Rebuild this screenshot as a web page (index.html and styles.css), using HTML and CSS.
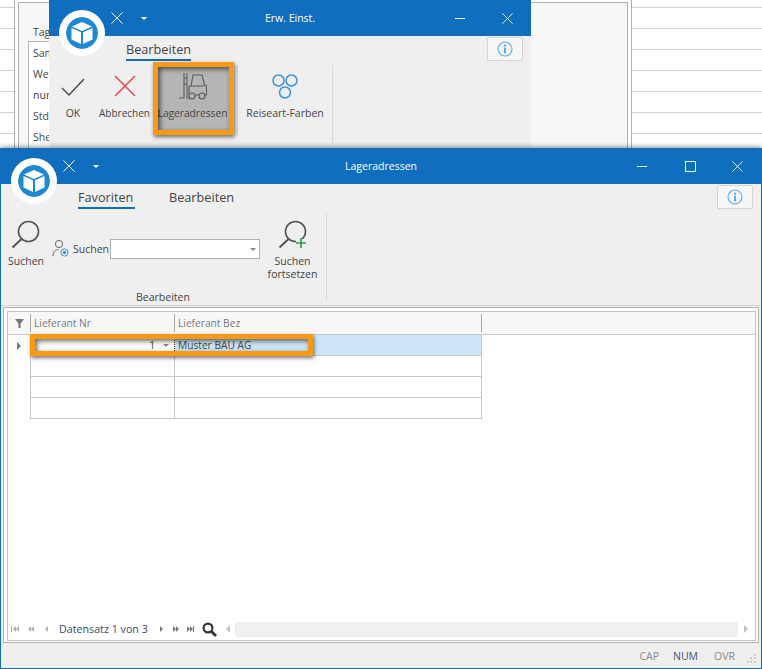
FILE: index.html
```html
<!DOCTYPE html>
<html lang="en">
<head>
    <meta charset="UTF-8">
    <meta name="viewport" content="width=device-width, initial-scale=1.0">
    <title>Lageradressen</title>
    <link rel="stylesheet" href="styles.css">
</head>
<body>
    <svg class="defs" width="0" height="0">
        <symbol id="cube" viewBox="0 0 32 32">
            <circle cx="16" cy="16" r="16" fill="#1e88d2"/>
            <path d="M16 5 L26 9.5 L16 14 L6 9.5 Z" fill="#fff"/>
            <path d="M5.5 11 L15 15.3 L15 27 L5.5 22.5 Z" fill="#fff"/>
            <path d="M26.5 11 L17 15.3 L17 27 L26.5 22.5 Z" fill="#fff"/>
        </symbol>
        <symbol id="info" viewBox="0 0 16 16">
            <circle cx="8" cy="8" r="7" fill="none" stroke="#5aaee6" stroke-width="1.1"/>
            <rect x="7" y="3.6" width="2" height="2" fill="#5aaee6"/>
            <rect x="7" y="6.6" width="2" height="5.8" fill="#5aaee6"/>
        </symbol>
        <symbol id="close" viewBox="0 0 14 14">
            <path d="M0.500 0.500 L13.500 13.500 M13.500 0.500 L0.500 13.500" fill="none" stroke="#fff" stroke-width="1.100"/>
        </symbol>
        <symbol id="lens" viewBox="0 0 30 30">
            <circle cx="17.500" cy="11.500" r="10" fill="none" stroke="#555" stroke-width="1.600"/>
            <path d="M10.500 19 L1.500 27.500" fill="none" stroke="#555" stroke-width="2"/>
        </symbol>
    </svg>

    <div class="desktop">
        <!-- what shows behind the two dialogs -->
        <div class="backdrop">
            <div class="back-outer">
                <div class="back-panel">
                    <span class="back-label">Tag</span>
                    <div class="back-list">
                        <span>Sam</span>
                        <span>We</span>
                        <span>nur</span>
                        <span>Std</span>
                        <span>She</span>
                    </div>
                </div>
            </div>
        </div>

        <!-- Erw. Einst. dialog -->
        <div class="window window-back">
            <div class="titlebar">
                <svg class="qa-close"><use href="#close"/></svg>
                <span class="qa-arrow"></span>
                <span class="title">Erw. Einst.</span>
                <span class="win-min"></span>
                <svg class="win-close"><use href="#close"/></svg>
            </div>
            <svg class="logo"><use href="#cube"/></svg>
            <div class="tabs">
                <span class="tab active">Bearbeiten</span>
            </div>
            <button class="info-btn"><svg><use href="#info"/></svg></button>
            <div class="ribbon">
                <div class="rb rb-ok">
                    <svg width="24" height="18" viewBox="0 0 24 18"><path d="M1 10 L8 17 L23 1" fill="none" stroke="#444" stroke-width="1.300"/></svg>
                    <span>OK</span>
                </div>
                <div class="rb rb-cancel">
                    <svg width="22" height="22" viewBox="0 0 22 22"><path d="M1 1 L21 21 M21 1 L1 21" fill="none" stroke="#e8464e" stroke-width="1.500"/></svg>
                    <span>Abbrechen</span>
                </div>
                <div class="rb rb-store">
                    <svg width="28" height="28" viewBox="0 0 28 28">
                        <g fill="none" stroke="#5a5a5a" stroke-width="1.100">
                            <path d="M5 0 V25 H0 M8 0 V25 H10 M5 5 H8 M5 11 H8"/>
                            <path d="M12 13 L14 2 H23 L25.500 12 Q27.500 12 27.500 14 V22 H26 M20 22 H16 M10 22 V14 Q10 13 12 13 H25.500"/>
                            <circle cx="13" cy="23" r="3"/>
                            <circle cx="23" cy="23" r="3"/>
                        </g>
                    </svg>
                    <span>Lageradressen</span>
                </div>
                <i class="rb-sep"></i>
                <div class="rb rb-colors">
                    <svg width="26" height="25" viewBox="0 0 26 25">
                        <g fill="none" stroke="#3b94d6" stroke-width="1.500">
                            <circle cx="6.500" cy="6.500" r="5.500"/>
                            <circle cx="19.500" cy="6.500" r="5.500"/>
                            <circle cx="13" cy="18.500" r="5.500"/>
                        </g>
                    </svg>
                    <span>Reiseart-Farben</span>
                </div>
                <i class="rb-sep rb-sep-long"></i>
            </div>
            <div class="mark mark-store"></div>
        </div>

        <!-- Lageradressen window -->
        <div class="window window-front">
            <div class="titlebar">
                <svg class="qa-close"><use href="#close"/></svg>
                <span class="qa-arrow"></span>
                <span class="title">Lageradressen</span>
                <span class="win-min"></span>
                <span class="win-max"></span>
                <svg class="win-close"><use href="#close"/></svg>
            </div>
            <svg class="logo"><use href="#cube"/></svg>
            <div class="tabs">
                <span class="tab active">Favoriten</span>
                <span class="tab">Bearbeiten</span>
            </div>
            <button class="info-btn"><svg><use href="#info"/></svg></button>
            <div class="ribbon ribbon-front">
                <div class="group">
                    <div class="group-items">
                        <div class="rb rb-search">
                            <svg width="30" height="30"><use href="#lens"/></svg>
                            <span>Suchen</span>
                        </div>
                        <div class="search-field">
                            <svg width="17" height="19" viewBox="0 0 17 19">
                                <g fill="none" stroke="#666" stroke-width="1">
                                    <circle cx="7" cy="5" r="3.600"/>
                                    <path d="M1 17 C1 12 4 10.500 6.500 10.500 M10 10.500 L11 10.800"/>
                                </g>
                                <circle cx="12.500" cy="13.500" r="3.600" fill="none" stroke="#3b94d6"/>
                                <circle cx="12.500" cy="13.500" r="1.700" fill="#3b94d6"/>
                            </svg>
                            <label>Suchen</label>
                            <div class="combo"><i></i></div>
                        </div>
                        <div class="rb rb-continue">
                            <svg width="30" height="30" viewBox="0 0 30 30">
                                <use href="#lens"/>
                                <rect x="18" y="19" width="11" height="10" fill="#efefef"/>
                                <path d="M23 18 V28 M18 23 H28" stroke="#2f9a48" stroke-width="1.600"/>
                            </svg>
                            <span>Suchen<br>fortsetzen</span>
                        </div>
                    </div>
                    <div class="group-name">Bearbeiten</div>
                </div>
                <i class="rb-sep"></i>
            </div>

            <div class="frame">
                <div class="frame-inner">
                    <div class="grid">
                        <div class="grid-row grid-head">
                            <div class="cell-ind">
                                <svg width="9" height="9" viewBox="0 0 10 10"><path d="M0 0 H10 L6.200 5 V10 H3.800 V5 Z" fill="#777"/></svg>
                            </div>
                            <div class="cell">Lieferant Nr</div>
                            <div class="cell">Lieferant Bez</div>
                        </div>
                        <div class="grid-row grid-current">
                            <div class="cell-ind"><i class="row-arrow"></i></div>
                            <div class="cell cell-num">1<i class="cell-drop"></i></div>
                            <div class="cell cell-sel">Muster BAU AG</div>
                        </div>
                        <div class="grid-row">
                            <div class="cell-ind"></div><div class="cell"></div><div class="cell"></div>
                        </div>
                        <div class="grid-row">
                            <div class="cell-ind"></div><div class="cell"></div><div class="cell"></div>
                        </div>
                        <div class="grid-row">
                            <div class="cell-ind"></div><div class="cell"></div><div class="cell"></div>
                        </div>
                        <div class="mark mark-row"></div>
                    </div>
                    <div class="navbar">
                        <div class="nav-btns">
                            <i class="nav-first"></i><i class="nav-prev2"></i><i class="nav-prev"></i>
                        </div>
                        <span class="nav-text">Datensatz 1 von 3</span>
                        <div class="nav-btns nav-btns-right">
                            <i class="nav-next"></i><i class="nav-next2"></i><i class="nav-last"></i>
                        </div>
                        <svg class="nav-lens" width="15" height="15" viewBox="0 0 15 15">
                            <circle cx="6" cy="6" r="4.400" fill="none" stroke="#333" stroke-width="2.200"/>
                            <path d="M9.500 9.500 L14 14" stroke="#333" stroke-width="2.800"/>
                        </svg>
                        <div class="hscroll">
                            <span class="hs-btn"><i class="hs-left"></i></span>
                            <span class="hs-btn"><i class="hs-right"></i></span>
                        </div>
                    </div>
                </div>
            </div>

            <div class="statusbar">
                <span class="st-off">CAP</span>
                <span class="st-on">NUM</span>
                <span class="st-off">OVR</span>
                <svg class="grip" width="10" height="10" viewBox="0 0 10 10">
                    <path d="M8 1h1.500v1.500H8zM8 4.500h1.500V6H8zM8 8h1.500v1.500H8zM4.500 4.500H6V6H4.500zM4.500 8H6v1.500H4.500zM1 8h1.500v1.500H1z" fill="#b4b4b4"/>
                </svg>
            </div>
        </div>
    </div>
</body>
</html>
```

FILE: styles.css
```css
* {
    box-sizing: border-box;
}

html, body {
    margin: 0;
    padding: 0;
}

body {
    font-family: "Open Sans", "Liberation Sans", sans-serif;
    font-size: 10.5px;
    color: #444;
}

.defs {
    position: absolute;
}

.desktop {
    position: relative;
    width: 762px;
    height: 669px;
    overflow: hidden;
    background: #fff;
}

/* background behind the dialogs */
.backdrop {
    position: absolute;
    left: 0;
    top: 0;
    width: 762px;
    height: 148px;
    padding-left: 14px;
    background-color: #fff;
    background-image: linear-gradient(to bottom, transparent 7px, #d0d0d0 7px, #d0d0d0 8px, transparent 8px);
    background-size: 100% 21px;
}

.back-outer {
    width: 618px;
    height: 148px;
    padding: 2px 3px 0;
    background: #fff;
    border-left: 1px solid #b0b0b0;
    border-right: 1px solid #b0b0b0;
}

.back-panel {
    width: 610px;
    height: 146px;
    background: #f7f7f7;
    border: 1px solid #b0b0b0;
    border-bottom: 0;
    padding: 0;
}

.back-label {
    display: block;
    margin: 22px 0 0 14px;
    line-height: 14px;
}

.back-list {
    display: flex;
    flex-direction: column;
    width: 300px;
    margin: 2px 0 0 9px;
    padding-left: 4px;
    height: 110px;
    border: 1px solid #b8b8b8;
    background: #fff;
}

.back-list span {
    height: 21px;
    line-height: 21px;
    padding-top: 1px;
}

/* windows */
.window {
    position: absolute;
    background: #efefef;
}

.window-back {
    left: 49px;
    top: 0;
    width: 482px;
    height: 148px;
}

.window-front {
    left: 0;
    top: 148px;
    width: 762px;
    height: 521px;
    display: flex;
    flex-direction: column;
    border: 1px solid #106ebe;
    border-top: 0;
    box-shadow: 0 -1px 5px rgba(0, 0, 0, 0.45);
}

.titlebar {
    position: relative;
    height: 36px;
    flex: none;
    background: #106ebe;
    color: #fff;
    display: flex;
    align-items: center;
}

.window-front .titlebar {
    margin: 0 -1px;
}

.title {
    position: absolute;
    left: 0;
    right: 0;
    top: 10px;
    text-align: center;
    line-height: 16px;
}

.qa-close {
    position: absolute;
    left: 63px;
    top: 12px;
    width: 12px;
    height: 12px;
}

.window-back .qa-close {
    left: 62px;
}

.qa-arrow {
    position: absolute;
    left: 93px;
    top: 17px;
    border: 3px solid transparent;
    border-top: 3px solid #fff;
    border-bottom: 0;
}

.window-back .qa-arrow {
    left: 92px;
}

.win-min {
    position: absolute;
    right: 66px;
    top: 18px;
    width: 10px;
    height: 1px;
    background: #fff;
}

.window-front .win-min {
    right: 115px;
}

.win-max {
    position: absolute;
    right: 66px;
    top: 13px;
    width: 11px;
    height: 11px;
    border: 1px solid #fff;
}

.win-close {
    position: absolute;
    right: 18px;
    top: 13px;
    width: 11px;
    height: 11px;
}

.window-front .win-close {
    right: 19px;
}

.logo {
    position: absolute;
    left: 17px;
    top: 17px;
    width: 32px;
    height: 32px;
    border-radius: 50%;
    background: #fff;
    box-shadow: 0 0 0 7px #fff;
}

.tabs {
    display: flex;
    gap: 34px;
    height: 26px;
    flex: none;
    padding-left: 77px;
}

.tab {
    height: 25px;
    font-size: 12.7px;
    line-height: 27px;
    color: #444;
}

.tab.active {
    border-bottom: 2px solid #106ebe;
}

.window-front .tab.active {
    width: 57px;
}

.info-btn {
    position: absolute;
    right: 8px;
    top: 37px;
    width: 36px;
    height: 24px;
    padding: 0;
    background: #f6f6f6;
    border: 1px solid #d4d4d4;
    border-radius: 2px;
    display: flex;
    align-items: center;
    justify-content: center;
}

.info-btn svg {
    width: 16px;
    height: 16px;
}

/* ribbon */
.ribbon {
    display: flex;
    height: 80px;
    padding: 3px 0 0 5px;
}

.rb {
    display: flex;
    flex-direction: column;
    align-items: center;
    text-align: center;
    line-height: 13px;
    white-space: nowrap;
}

.rb svg {
    flex: none;
}

.rb-sep {
    flex: none;
    width: 1px;
    height: 71px;
    background: #d8d8d8;
}

.rb-sep-long {
    height: 80px;
}

.rb-ok {
    width: 38px;
    padding-top: 13px;
}

.rb-ok svg {
    margin-bottom: 11px;
}

.rb-cancel {
    width: 61px;
    margin-left: 2px;
    padding-top: 10px;
    font-size: 10px;
}

.rb-cancel svg {
    margin-bottom: 10px;
}

.rb-store {
    width: 79px;
    height: 73px;
    margin: -3px 5px 0 -2px;
    padding-top: 11px;
    background: #b5b5b5;
    font-size: 10.2px;
}

.rb-store svg {
    margin-bottom: 6px;
}

.rb-colors {
    width: 94px;
    margin-left: 1px;
    margin-right: -1px;
    padding: 9px 2px 0 0;
}

.rb-colors svg {
    margin-bottom: 8px;
}

/* orange callouts from the manual */
.mark {
    position: absolute;
    border: 5px solid #f79a16;
    box-shadow: 1px 2px 4px rgba(0, 0, 0, 0.55), inset 2px 2px 5px rgba(0, 0, 0, 0.6);
}

.mark-store {
    left: 104px;
    top: 62px;
    width: 81px;
    height: 73px;
}

.mark-row {
    left: 22px;
    top: 22px;
    width: 283px;
    height: 22px;
}

.ribbon-front {
    height: 122px;
    padding: 30px 0 0 0;
    margin-top: -26px;
    flex: none;
    border-bottom: 1px solid #d4d4d4;
}

.ribbon-front .rb-sep {
    height: 87px;
}

.group {
    width: 325px;
    display: flex;
    flex-direction: column;
}

.group-items {
    display: flex;
    height: 76px;
    padding-top: 6px;
}

.group-name {
    text-align: center;
    line-height: 14px;
    padding-right: 1px;
}

.rb-search {
    width: 50px;
}

.rb-search svg, .rb-continue svg {
    margin-bottom: 5px;
}

.search-field {
    width: 209px;
    height: 21px;
    margin-top: 18px;
    display: flex;
    align-items: center;
}

.search-field svg {
    flex: none;
    margin-left: 1px;
}

.search-field label {
    margin-left: 4px;
    width: 37px;
    flex: none;
}

.combo {
    position: relative;
    width: 150px;
    height: 20px;
    background: #fff;
    border: 1px solid #b0b0b0;
}

.combo i {
    position: absolute;
    right: 3px;
    top: 8px;
    border: 3px solid transparent;
    border-top: 3px solid #888;
    border-bottom: 0;
}

.rb-continue {
    width: 65px;
}

/* grid frame */
.frame {
    flex: 1;
    margin: 1px 2px 1px 2px;
    padding: 3px 2px 1px 3px;
    border: 1px solid #b4b4b4;
    background: #fff;
    min-height: 0;
}

.frame-inner {
    height: 100%;
    border: 1px solid #c4c4c4;
    background: #fff;
    display: flex;
    flex-direction: column;
}

.grid {
    position: relative;
    flex: 1;
    font-size: 10.2px;
}

.grid-row {
    display: grid;
    grid-template-columns: 23px 144px 307px;
    height: 21px;
    border-bottom: 1px solid #c8c8c8;
    width: 474px;
}

.grid-head {
    height: 23px;
    width: 100%;
    background: #f7f7f7;
    color: #777;
}

.grid-head .cell {
    border-right: 1px solid #a8a8a8;
    margin: 2px 0;
    line-height: 18px;
}

.cell-ind {
    display: flex;
    align-items: center;
    justify-content: center;
    border-right: 1px solid #c8c8c8;
}

.grid-row:not(.grid-head) .cell-ind {
    margin-bottom: -1px;
    background: #fff;
    position: relative;
}

.grid-head .cell-ind {
    margin: 2px 0;
    border-right-color: #a8a8a8;
}

.cell {
    padding: 0 3px;
    line-height: 20px;
    border-right: 1px solid #c8c8c8;
    white-space: nowrap;
}

.row-arrow {
    display: block;
    border: 4px solid transparent;
    border-left: 4px solid #777;
    border-right: 0;
}

.cell-num {
    position: relative;
    text-align: right;
    padding-right: 19px;
    border-right: 1px dotted #333;
}

.cell-drop {
    position: absolute;
    right: 5px;
    top: 9px;
    border: 3px solid transparent;
    border-top: 3px solid #888;
    border-bottom: 0;
}

.cell-sel {
    background: #cce4f7;
}

/* record navigator */
.navbar {
    display: flex;
    align-items: center;
    height: 20px;
    flex: none;
    margin-bottom: 1px;
    padding: 0 2px;
}

.nav-btns {
    display: flex;
    align-items: center;
    width: 46px;
    height: 10px;
    position: relative;
}

.nav-btns i {
    position: absolute;
    top: 2px;
    border: 3px solid transparent;
    border-left: 0;
    border-right: 3px solid #b0b0b0;
}

.nav-first {
    left: 3px;
}

.nav-first::before {
    content: "";
    position: absolute;
    left: -2px;
    top: -3px;
    width: 1px;
    height: 6px;
    background: #b0b0b0;
}

.nav-first::after, .nav-prev2::after {
    content: "";
    position: absolute;
    left: 3px;
    top: -3px;
    border: 3px solid transparent;
    border-left: 0;
    border-right: 3px solid #b0b0b0;
}

.nav-prev2 {
    left: 18px;
}

.nav-prev {
    left: 35px;
}

.nav-text {
    margin-left: 3px;
    width: 98px;
    flex: none;
    color: #3c4a5c;
    font-size: 10.7px;
    white-space: nowrap;
}

.nav-btns-right i {
    border-right: 0;
    border-left: 3px solid #777;
}

.nav-next {
    left: 3px;
}

.nav-next2 {
    left: 16px;
}

.nav-last {
    left: 30px;
}

.nav-next2::after, .nav-last::after {
    content: "";
    position: absolute;
    left: 0;
    top: -3px;
    border: 3px solid transparent;
    border-right: 0;
    border-left: 3px solid #777;
}

.nav-last::before {
    content: "";
    position: absolute;
    left: 3px;
    top: -3px;
    width: 1px;
    height: 6px;
    background: #777;
}

.nav-lens {
    flex: none;
    margin-left: -1px;
}

.hscroll {
    flex: 1;
    height: 15px;
    margin-left: 3px;
    background: #f0f0f0;
    display: flex;
    justify-content: space-between;
}

.hs-btn {
    width: 15px;
    height: 15px;
    background: #fff;
    display: flex;
    align-items: center;
    justify-content: center;
}

.hs-left, .hs-right {
    border: 4px solid transparent;
    border-left: 0;
    border-right: 4px solid #c0c0c0;
}

.hs-right {
    border-right: 0;
    border-left: 4px solid #c0c0c0;
}

/* status bar */
.statusbar {
    display: flex;
    align-items: center;
    justify-content: flex-end;
    height: 24px;
    flex: none;
    background: #efefef;
    color: #888;
}

.statusbar span {
    margin-right: 14px;
}

.statusbar .st-on {
    margin-right: 16px;
    color: #44546a;
}

.statusbar span:nth-of-type(3) {
    margin-right: 11px;
}

.grip {
    margin: 4px 5px 0 0;
}
```
